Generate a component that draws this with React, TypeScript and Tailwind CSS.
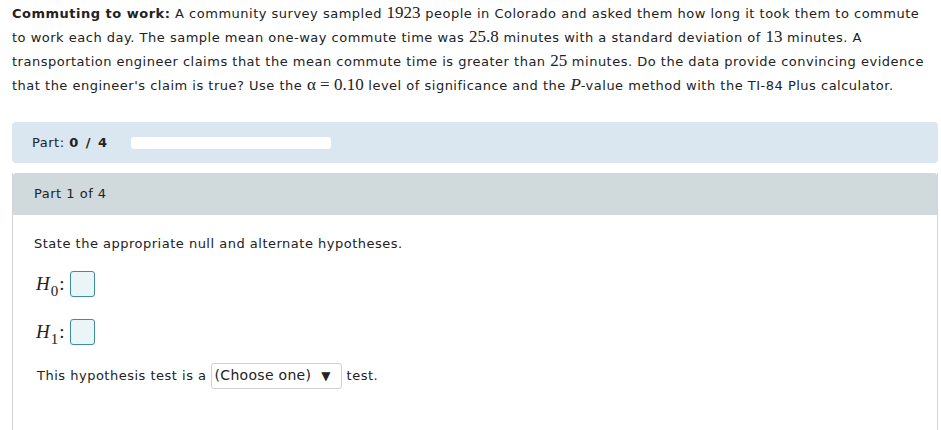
import React from "react";

const N = ({ children }: { children: React.ReactNode }) => (
  <span className="text-[17px] leading-[0] tracking-normal" style={{ fontFamily: '"Liberation Serif", serif' }}>{children}</span>
);

const H = ({ sub }: { sub: string }) => (
  <span className="text-[19px] leading-none tracking-normal" style={{ fontFamily: '"Liberation Serif", serif' }}>
    <i>H</i>
    <span className="relative top-[6px] ml-[1px] text-[15px]">{sub}</span>
    <span className="ml-[1px]">:</span>
  </span>
);

export default function App() {
  return (
    <div className="w-[941px] h-[430px] bg-white overflow-hidden text-[#222] text-[13px] tracking-[0.5px]" style={{ fontFamily: '"DejaVu Sans", Verdana, sans-serif' }}>
      <div className="pl-[12px] pr-[4px] pt-[2px] leading-[24px]">
        <b>Commuting to work:</b> A community survey sampled <N>1923</N> people in Colorado and asked them how long it took them to commute to work each day. The sample mean one-way commute time was <N>25.8</N> minutes with a standard deviation of <N>13</N> minutes. A transportation engineer claims that the mean commute time is greater than <N>25</N> minutes. Do the data provide convincing evidence that the engineer's claim is true? Use the <N>α = 0.10</N> level of significance and the <N><i>P</i></N>-value method with the TI-84 Plus calculator.
      </div>
      <div className="ml-[12px] mr-[3px] mt-[24px] h-[41px] rounded-[4px] bg-[#dae6f0] flex items-center pl-[20px]">
        <span>Part: <b className="tracking-[1.5px]">0 / 4</b></span>
        <div className="ml-[22px] w-[200px] h-[12px] rounded-[3px] bg-white" />
      </div>
      <div className="ml-[12px] mr-[3px] mt-[10px] border-l border-r border-[#d4d4d4]">
        <div className="h-[42px] bg-[#d0dadd] flex items-center pl-[21px] rounded-t-[3px]">Part 1 of 4</div>
        <div className="pl-[21px] pt-[19px] h-[260px]">
          <div>State the appropriate null and alternate hypotheses.</div>
          <div className="mt-[17px] flex items-center pl-[2px]">
            <H sub="0" />
            <div className="ml-[5px] w-[25px] h-[26px] rounded-[3px] border border-[#3f8f97] bg-[#eaf5f8]" />
          </div>
          <div className="mt-[22px] flex items-center pl-[2px]">
            <H sub="1" />
            <div className="ml-[5px] w-[25px] h-[26px] rounded-[3px] border border-[#3f8f97] bg-[#eaf5f8]" />
          </div>
          <div className="mt-[18px] flex items-center pl-[3px]">
            <span>This hypothesis test is a</span>
            <div className="ml-[4px] w-[131px] h-[26px] rounded-[3px] border border-[#d0d0d0] flex items-center pl-[3px]">
              <span className="text-[14px] tracking-[0.3px]">(Choose one)</span>
              <span className="ml-[10px] text-[12px]">▼</span>
            </div>
            <span className="ml-[5px]">test.</span>
          </div>
        </div>
      </div>
    </div>
  );
}
